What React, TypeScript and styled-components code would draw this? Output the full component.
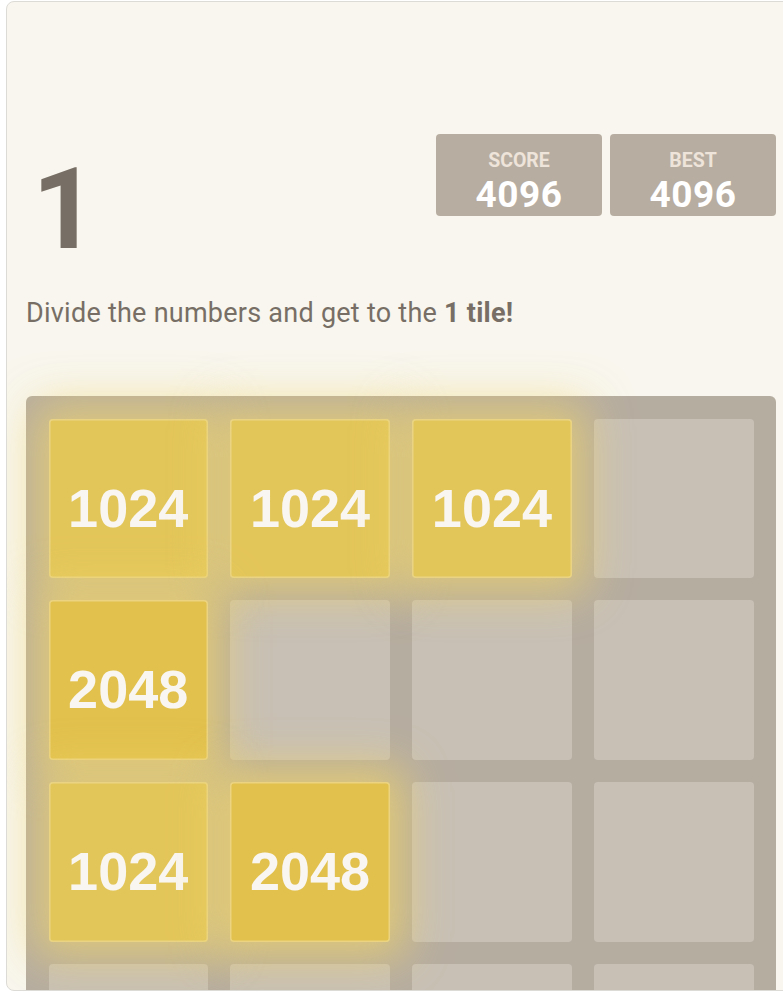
import styled, { createGlobalStyle } from "styled-components";

type TileValue = 1024 | 2048;

interface TileData {
  value: TileValue;
  row: number;
  col: number;
}

const tiles: TileData[] = [
  { value: 1024, row: 1, col: 1 },
  { value: 1024, row: 1, col: 2 },
  { value: 1024, row: 1, col: 3 },
  { value: 2048, row: 2, col: 1 },
  { value: 1024, row: 3, col: 1 },
  { value: 2048, row: 3, col: 2 },
];

const tileColors: Record<TileValue, { bg: string; glow: string; edge: string }> = {
  1024: {
    bg: "#e3c65a",
    glow: "rgba(240, 212, 104, 0.68)",
    edge: "rgba(255, 255, 255, 0.26)",
  },
  2048: {
    bg: "#e2c14d",
    glow: "rgba(240, 212, 104, 0.74)",
    edge: "rgba(255, 255, 255, 0.3)",
  },
};

const App = () => {
  return (
    <>
      <GlobalStyle />
      <Frame>
        <Container>
          <Heading>
            <Title>1</Title>
            <Scores>
              <ScoreBox>
                <ScoreLabel>Score</ScoreLabel>
                <ScoreValue>4096</ScoreValue>
              </ScoreBox>
              <ScoreBox>
                <ScoreLabel>Best</ScoreLabel>
                <ScoreValue>4096</ScoreValue>
              </ScoreBox>
            </Scores>
          </Heading>
          <Intro>
            Divide the numbers and get to the <strong>1 tile!</strong>
          </Intro>
          <Board>
            <CellLayer>
              {Array.from({ length: 16 }).map((_, i) => (
                <Cell key={i} />
              ))}
            </CellLayer>
            <TileLayer>
              {tiles.map((t) => (
                <Tile key={`${t.row}-${t.col}`} $value={t.value} $row={t.row} $col={t.col}>
                  {t.value}
                </Tile>
              ))}
            </TileLayer>
          </Board>
        </Container>
      </Frame>
    </>
  );
};

export default App;

const GlobalStyle = createGlobalStyle`
  html, body {
    margin: 0;
    padding: 0;
    background: #ffffff;
    overflow: hidden;
  }
`;

const Frame = styled.div`
  box-sizing: border-box;
  width: 820px;
  height: 990px;
  margin: 1px 0 0 6px;
  padding: 0 19px;

  border: 1px solid #dddbd6;
  border-radius: 8px;
  background: #f8f6ee;
  overflow: hidden;
`;

const Container = styled.div`
  width: 750px;
`;

const Heading = styled.div`
  display: flex;
  justify-content: space-between;
  align-items: flex-start;
  padding-top: 132px;
`;

const Title = styled.h1`
  margin: 17px 0 0 6px;
  font-family: Roboto, "Liberation Sans", Arial, sans-serif;
  font-size: 114px;
  font-weight: bold;
  line-height: 116px;
  color: #776e65;
`;

const Scores = styled.div`
  display: flex;
  gap: 8px;
`;

const ScoreBox = styled.div`
  box-sizing: border-box;
  width: 166px;
  height: 82px;
  padding-top: 17px;

  display: flex;
  flex-direction: column;
  align-items: center;
  gap: 5px;

  border-radius: 4px;
  background: #b8ada1;
  font-family: Roboto, "Open Sans", sans-serif;
  font-weight: bold;
`;

const ScoreLabel = styled.span`
  font-size: 19.5px;
  line-height: 1;
  text-transform: uppercase;
  color: #eee4da;
`;

const ScoreValue = styled.span`
  font-size: 37px;
  line-height: 1;
  letter-spacing: 0.5px;
  color: #ffffff;
`;

const Intro = styled.p`
  margin: 28px 0 0;
  font-family: Roboto, "Open Sans", sans-serif;
  font-size: 27px;
  line-height: 36px;
  letter-spacing: 0.25px;
  color: #776e65;

  strong {
    font-weight: bold;
  }
`;

const Board = styled.div`
  box-sizing: border-box;
  width: 750px;
  margin-top: 65px;
  padding: 22.5px;

  display: grid;
  border-radius: 6px;
  background: #b6ada1;

  & > * {
    grid-area: 1 / 1;
  }
`;

const CellLayer = styled.div`
  display: grid;
  grid-template-columns: repeat(4, 1fr);
  grid-auto-rows: 159.375px;
  gap: 22.5px;
`;

const Cell = styled.div`
  border-radius: 4px;
  background: #c8c0b5;
`;

const TileLayer = styled.div`
  display: grid;
  grid-template-columns: repeat(4, 1fr);
  grid-template-rows: repeat(4, 159.375px);
  gap: 22.5px;
`;

const Tile = styled.div<{ $value: TileValue; $row: number; $col: number }>`
  grid-row: ${({ $row }) => $row};
  grid-column: ${({ $col }) => $col};
  box-sizing: border-box;
  padding-top: 22px;

  border-radius: 4px;
  background: ${({ $value }) => tileColors[$value].bg};
  box-shadow:
    0 0 45px 15px ${({ $value }) => tileColors[$value].glow},
    inset 0 0 0 1.5px ${({ $value }) => tileColors[$value].edge};

  font-family: "Liberation Sans", Arial, sans-serif;
  font-size: 54px;
  font-weight: bold;
  line-height: 135px;
  text-align: center;
  color: #f9f6f2;
`;
